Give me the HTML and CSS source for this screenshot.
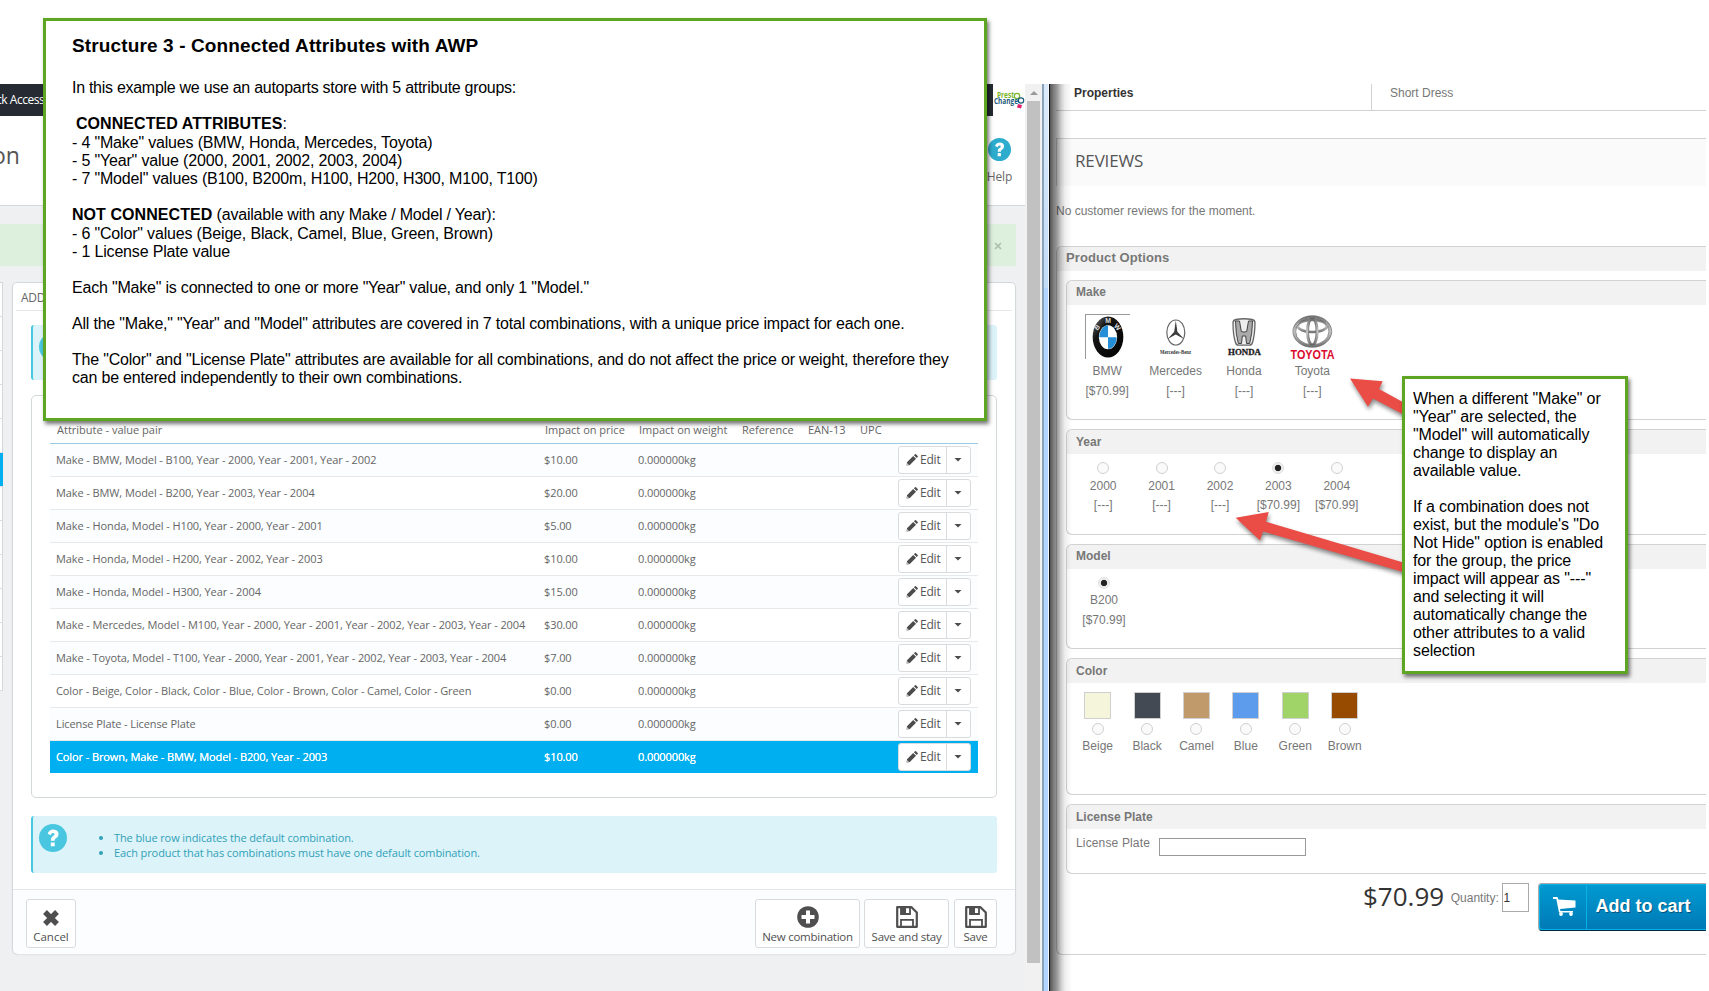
FILE: index.html
```html
<!DOCTYPE html>
<html lang="en">
<head>
<meta charset="utf-8">
<title>Connected Attributes with AWP</title>
<link rel="stylesheet" href="styles.css">
</head>
<body>
<svg class="sprite" aria-hidden="true">
  <symbol id="pencil" viewBox="0 0 12 12"><path d="M1 8.200 7.200 2l2.800 2.800L3.800 11 .6 11.600zM7.900 1.300 9 .3q.5-.4 1 0L11.700 2q.4.5 0 1l-1 1.100z"/><path d="M1.400 9.300l1.300 1.300-1 .3-.5-.5z" fill="#fff"/></symbol>
  <symbol id="question" viewBox="0 0 28 28"><circle cx="14" cy="14" r="14"/><path class="mark" d="M8.600 9.600Q10.500 5.600 14.300 5.600q5.200.3 5.300 4.700 0 2.600-3.300 4.500-.6.500-.6 1.900h-3.900q-.1-3 1.600-4.200 2.200-1.100 2.200-2.200-.1-1.300-1.600-1.300-1.300 0-2.600 2.300zM11.800 18.400h3.900v3.900h-3.900z"/></symbol>
  <symbol id="floppy" viewBox="0 0 22 22"><path d="M1.200 1.200h14.300l5.300 5.300v14.300H1.200z" fill="none" stroke="currentColor" stroke-width="2.200" stroke-linejoin="round"/><path d="M5 20v-6.200h12V20M5 2v6h9V2" fill="none" stroke="currentColor" stroke-width="1.800"/><path d="M5 2h5v6H5z"/></symbol>
</svg>
<main class="desktop">
  <section class="admin">
    <header class="topbar"><span class="quick">ck Access</span><span class="brand">
      <svg width="32" height="32" viewBox="0 0 32 32"><text x="4" y="13.500" class="lg1" textLength="17" lengthAdjust="spacingAndGlyphs">Prest</text><circle cx="24" cy="12" r="2.700" fill="none" stroke="#7ab629" stroke-width="1.200"/><text x="1" y="20" class="lg2" textLength="24" lengthAdjust="spacingAndGlyphs">Change</text><circle cx="28" cy="16.500" r="2.700" fill="none" stroke="#1c5b7c" stroke-width="1.200"/><path d="M25 20l4 1-1 3.500-4-1z" fill="#e0206c"/></svg></span></header>
    <div class="titlebar"><h2>on</h2><div class="help"><svg width="23" height="23" fill="#2eacce"><use href="#question"/></svg><span>Help</span></div></div>
    <div class="success"><svg width="8" height="8" viewBox="0 0 8 8"><path d="M1 1l6 6M7 1L1 7" stroke="#a9bfac" stroke-width="1.700"/></svg></div>
    <div class="workspace">
      <nav class="tabs"><i></i><i></i><i></i><i></i><i></i><i class="active"></i><i></i><i></i><i></i><i></i><i></i><i></i></nav>
      <div class="panel">
        <h3>ADD</h3>
        <div class="notice notice-top"><svg width="28" height="28" fill="#4ac7e0"><use href="#question"/></svg></div>
        <div class="combos">
          <div class="row head"><span>Attribute - value pair</span><span>Impact on price</span><span>Impact on weight</span><span>Reference</span><span>EAN-13</span><span>UPC</span></div>
          <div class="row"><span>Make - BMW, Model - B100, Year - 2000, Year - 2001, Year - 2002</span><span>$10.00</span><span>0.000000kg</span><div class="btn"><b><svg width="12" height="12"><use href="#pencil"/></svg>Edit</b><i></i></div></div>
          <div class="row"><span>Make - BMW, Model - B200, Year - 2003, Year - 2004</span><span>$20.00</span><span>0.000000kg</span><div class="btn"><b><svg width="12" height="12"><use href="#pencil"/></svg>Edit</b><i></i></div></div>
          <div class="row"><span>Make - Honda, Model - H100, Year - 2000, Year - 2001</span><span>$5.00</span><span>0.000000kg</span><div class="btn"><b><svg width="12" height="12"><use href="#pencil"/></svg>Edit</b><i></i></div></div>
          <div class="row"><span>Make - Honda, Model - H200, Year - 2002, Year - 2003</span><span>$10.00</span><span>0.000000kg</span><div class="btn"><b><svg width="12" height="12"><use href="#pencil"/></svg>Edit</b><i></i></div></div>
          <div class="row"><span>Make - Honda, Model - H300, Year - 2004</span><span>$15.00</span><span>0.000000kg</span><div class="btn"><b><svg width="12" height="12"><use href="#pencil"/></svg>Edit</b><i></i></div></div>
          <div class="row"><span>Make - Mercedes, Model - M100, Year - 2000, Year - 2001, Year - 2002, Year - 2003, Year - 2004</span><span>$30.00</span><span>0.000000kg</span><div class="btn"><b><svg width="12" height="12"><use href="#pencil"/></svg>Edit</b><i></i></div></div>
          <div class="row"><span>Make - Toyota, Model - T100, Year - 2000, Year - 2001, Year - 2002, Year - 2003, Year - 2004</span><span>$7.00</span><span>0.000000kg</span><div class="btn"><b><svg width="12" height="12"><use href="#pencil"/></svg>Edit</b><i></i></div></div>
          <div class="row"><span>Color - Beige, Color - Black, Color - Blue, Color - Brown, Color - Camel, Color - Green</span><span>$0.00</span><span>0.000000kg</span><div class="btn"><b><svg width="12" height="12"><use href="#pencil"/></svg>Edit</b><i></i></div></div>
          <div class="row"><span>License Plate - License Plate</span><span>$0.00</span><span>0.000000kg</span><div class="btn"><b><svg width="12" height="12"><use href="#pencil"/></svg>Edit</b><i></i></div></div>
          <div class="row default"><span>Color - Brown, Make - BMW, Model - B200, Year - 2003</span><span>$10.00</span><span>0.000000kg</span><div class="btn"><b><svg width="12" height="12"><use href="#pencil"/></svg>Edit</b><i></i></div></div>
        </div>
        <div class="notice notice-bottom"><svg width="28" height="28" fill="#4ac7e0"><use href="#question"/></svg><ul><li>The blue row indicates the default combination.</li><li>Each product that has combinations must have one default combination.</li></ul></div>
        <footer class="actions">
          <div class="act cancel"><svg width="18" height="18" viewBox="0 0 18 18"><path d="M3 3l12 12M15 3L3 15" stroke="currentColor" stroke-width="5.400"/></svg>Cancel</div>
          <div class="act new"><svg width="22" height="22" viewBox="0 0 22 22"><circle cx="11" cy="11" r="10.800"/><path d="M11 4.500v13M4.500 11h13" stroke="#fff" stroke-width="4"/></svg>New combination</div>
          <div class="act stay"><svg width="22" height="22"><use href="#floppy"/></svg>Save and stay</div>
          <div class="act save"><svg width="22" height="22"><use href="#floppy"/></svg>Save</div>
        </footer>
      </div>
    </div>
  </section>
  <div class="scrollbar"><i></i><b></b></div>
  <div class="frame"></div>
  <section class="shop">
    <div class="props"><b>Properties</b><span>Short Dress</span></div>
    <h2 class="reviews">REVIEWS</h2>
    <p class="none">No customer reviews for the moment.</p>
    <div class="options">
      <h3>Product Options</h3>
      <div class="groups">
        <div class="group make"><h4>Make</h4><div class="choices">
          <div class="opt"><svg class="chosen" width="45" height="45" viewBox="0 0 45 45"><defs><linearGradient id="g" x1="0" y1="0" x2="1" y2="1"><stop offset="0" stop-color="#777"/><stop offset=".3" stop-color="#151515"/><stop offset="1" stop-color="#000"/></linearGradient><linearGradient id="s" x1="0" y1="0" x2="0" y2="1"><stop offset="0" stop-color="#777"/><stop offset=".5" stop-color="#c5c5c5"/><stop offset="1" stop-color="#777"/></linearGradient></defs><ellipse cx="22.500" cy="22.500" rx="15.700" ry="21" fill="url(#g)"/><ellipse cx="22.500" cy="22.700" rx="9.300" ry="12.300" fill="#fff"/><path d="M22.500 10.800v11.900h-8.900a8.900 11.900 0 0 1 8.900-11.900zM22.500 34.600V22.700h8.900a8.900 11.900 0 0 1-8.900 11.900z" fill="#248fd6"/><g class="bmw"><text transform="translate(11.500 16) rotate(-48)">B</text><text x="19.700" y="8.400">M</text><text transform="translate(28 11.500) rotate(48)">W</text></g></svg><span>BMW</span><span>[$70.99]</span></div>
          <div class="opt"><svg width="45" height="45" viewBox="0 0 45 45"><ellipse cx="22.800" cy="18.500" rx="9" ry="12.500" fill="none" stroke="#666" stroke-width="1.200"/><path d="M22.800 6.500l1.600 11.200 6.500 7.300-8.100-4.400-8.100 4.400 6.500-7.300z" fill="#3d3d3d"/><text class="mb" x="7" y="40" textLength="31" lengthAdjust="spacingAndGlyphs">Mercedes-Benz</text></svg><span>Mercedes</span><span>[---]</span></div>
          <div class="opt"><svg width="45" height="45" viewBox="0 0 45 45"><path d="M15 5.500Q23 4 31 5.500q3 .5 3 3.500-.2 12-2.500 19.500-.5 2.500-3 2.700h-11q-2.500-.2-3-2.700Q12 21 12 9q0-3 3-3.500z" fill="#eee" stroke="#666" stroke-width="1.300"/><path d="M14.500 7h4l1.800 10.500q2.700 1.200 5.400 0L27.500 7h4q-.2 13-2.800 22.500h-3.200l-.8-7.500h-3.400l-.8 7.500h-3.200Q14.700 20 14.500 7z" fill="#aaa" stroke="#444" stroke-width="1"/><text class="ho" x="7" y="40.500" textLength="33" lengthAdjust="spacingAndGlyphs">HONDA</text></svg><span>Honda</span><span>[---]</span></div>
          <div class="opt"><svg width="45" height="45" viewBox="0 0 45 45" fill="none" stroke="url(#s)" stroke-width="2.600"><ellipse cx="22.300" cy="17.500" rx="18" ry="14.500"/><ellipse cx="22.300" cy="12" rx="14.500" ry="6"/><ellipse cx="22.300" cy="17.500" rx="5" ry="13.500"/><g stroke="#555" stroke-width=".6"><ellipse cx="22.300" cy="17.500" rx="19.400" ry="15.800"/><ellipse cx="22.300" cy="17.500" rx="16.600" ry="13.200"/><ellipse cx="22.300" cy="17.500" rx="3.700" ry="12.200"/></g><text class="to" x="0.500" y="45" textLength="44" lengthAdjust="spacingAndGlyphs">TOYOTA</text></svg><span>Toyota</span><span>[---]</span></div>
        </div></div>
        <div class="group year"><h4>Year</h4><div class="choices">
          <div class="opt"><i></i><span>2000</span><span>[---]</span></div><div class="opt"><i></i><span>2001</span><span>[---]</span></div><div class="opt"><i></i><span>2002</span><span>[---]</span></div><div class="opt"><i class="on"></i><span>2003</span><span>[$70.99]</span></div><div class="opt"><i></i><span>2004</span><span>[$70.99]</span></div>
        </div></div>
        <div class="group model"><h4>Model</h4><div class="choices"><div class="opt"><i class="on"></i><span>B200</span><span>[$70.99]</span></div></div></div>
        <div class="group color"><h4>Color</h4><div class="choices">
          <div class="opt"><b class="beige"></b><i></i><span>Beige</span></div><div class="opt"><b class="black"></b><i></i><span>Black</span></div><div class="opt"><b class="camel"></b><i></i><span>Camel</span></div><div class="opt"><b class="blue"></b><i></i><span>Blue</span></div><div class="opt"><b class="green"></b><i></i><span>Green</span></div><div class="opt"><b class="brown"></b><i></i><span>Brown</span></div>
        </div></div>
        <div class="group plate"><h4>License Plate</h4><label>License Plate <input type="text"></label></div>
      </div>
      <div class="buy"><strong>$70.99</strong><span>Quantity:</span><em>1</em>
        <div class="cart"><div><svg width="23" height="20" viewBox="0 0 23 20"><path d="M0 0h4.500l.8 2.500L22.500 3.500v7L7 12l.5 2H20v1.500H6L3.300 2H0z" fill="#fff"/><circle cx="8" cy="17" r="1.900" fill="#fff"/><circle cx="18" cy="17" r="1.900" fill="#fff"/></svg></div><b>Add to cart</b></div>
      </div>
    </div>
    <div class="shade"></div>
  </section>
</main>
<svg class="arrows" width="180" height="200" viewBox="1230 375 180 200"><g fill="#ea4c46"><path d="M1350 378.500L1382.700 381.300 1379 389 1410 406V418L1373 398.500 1368 406.700z"/><path d="M1235.700 517.700L1268.700 512 1266 521.700 1410 564.500V574L1263 531.500 1260 540.500z"/></g></svg>
<aside class="note intro">
  <h1>Structure 3 - Connected Attributes with AWP</h1>
  <p class="opening">In this example we use an autoparts store with 5 attribute groups:</p>
  <p class="lead con"><b>CONNECTED ATTRIBUTES</b>:</p>
  <p class="list">- 4 "Make" values (BMW, Honda, Mercedes, Toyota)<br>- 5 "Year" value (2000, 2001, 2002, 2003, 2004)<br>- 7 "Model" values (B100, B200m, H100, H200, H300, M100, T100)</p>
  <p class="lead"><b>NOT CONNECTED</b> (available with any Make / Model / Year):</p>
  <p class="list">- 6 "Color" values (Beige, Black, Camel, Blue, Green, Brown)<br>- 1 License Plate value</p>
  <p>Each "Make" is connected to one or more "Year" value, and only 1 "Model."</p>
  <p>All the "Make," "Year" and "Model" attributes are covered in 7 total combinations, with a unique price impact for each one.</p>
  <p>The "Color" and "License Plate" attributes are available for all combinations, and do not affect the price or weight, therefore they<br>can be entered independently to their own combinations.</p>
</aside>
<aside class="note tip">
  <p>When a different "Make" or<br>"Year" are selected, the<br>"Model" will automatically<br>change to display an<br>available value.</p>
  <p>If a combination does not<br>exist, but the module's "Do<br>Not Hide" option is enabled<br>for the group, the price<br>impact will appear as "---"<br>and selecting it will<br>automatically change the<br>other attributes to a valid<br>selection</p>
</aside>
</body>
</html>
```
FILE: styles.css
```css
* { box-sizing: border-box; }
body, h1, h2, h3, h4, p, ul { margin: 0; padding: 0; }
body { position: relative; width: 1709px; height: 991px; overflow: hidden; background: #fff; font-family: "Liberation Sans", Arial, sans-serif; }
i, em { font-style: normal; }
svg { display: block; flex: none; }
.sprite { position: absolute; width: 0; height: 0; }
.desktop { display: flex; width: 1706px; padding-top: 84px; height: 991px; }

/* Back-office window */
.admin { width: 1025px; background: #eff0f2; font-family: "Open Sans", sans-serif; font-size: 11px; letter-spacing: -.1px; color: #666; overflow: hidden; }
.topbar { display: flex; justify-content: space-between; height: 32px; background: #262b33; color: #fff; }
.quick { line-height: 32px; margin-left: -4px; font-size: 12px; letter-spacing: -.45px; white-space: nowrap; }
.brand { width: 32px; background: #fff; }
.lg1, .lg2 { font: bold 8px "Open Sans", sans-serif; fill: #7ab629; letter-spacing: 0; }
.lg2 { fill: #1c5b7c; }
.titlebar { display: flex; justify-content: space-between; height: 90px; background: #fff; border-bottom: 1px solid #d5d8da; }
.titlebar h2 { margin: 22px 0 0 -8px; font-weight: 400; font-size: 23px; line-height: 34px; color: #555; }
.help { width: 51px; display: flex; flex-direction: column; align-items: center; padding-top: 22px; }
.help span { font-size: 12px; line-height: 16px; margin-top: 8px; }
.mark { fill: #fff; }
.notice .mark { fill: #dbf3f7; }
.success { display: flex; justify-content: flex-end; align-items: center; width: 1016px; height: 42px; margin-top: 18px; padding: 2px 14px 0 0; background: #ddf0de; }
.workspace { display: flex; gap: 9px; margin-top: 16px; }
.tabs { width: 3px; height: 409px; background: #fff; border-right: 1px solid #d5d8da; border-top: 1px solid #d5d8da; }
.tabs i { display: block; height: 34px; border-bottom: 1px solid #dcdfe1; }
.tabs .active { width: 3px; background: #00aff0; }
.panel { width: 1004px; height: 672px; background: #fff; border: 1px solid #d3d8db; border-radius: 5px; box-shadow: 0 1px 2px #0001; }
.panel h3 { margin: 0 3px; height: 28px; padding-left: 5px; border-bottom: 1px solid #e8e8e8; font-weight: 400; font-size: 12px; line-height: 30px; letter-spacing: -.3px; }
.notice { display: flex; margin: 14px 18px 0 18px; background: #dcf4f9; border-left: 2px solid #4ac7e0; border-radius: 3px; color: #31a0b8; padding: 8px 6px; }
.notice-top { height: 55px; }
.combos { height: 403px; margin: 15px 18px 0 18px; border: 1px solid #d3d8db; border-radius: 5px; padding: 19px 18px 0 18px; }
.row { display: grid; grid-template-columns: 488px 94px 260px 73px; align-items: center; height: 33px; padding: 0 0 1px 6px; border-bottom: 1px solid #e6eaec; white-space: nowrap; font-size: 11px; }
.row:nth-child(even) { background: #fbfdff; }
.head { height: 29px; grid-template-columns: 488px 94px 103px 66px 52px 60px; border-color: #99cbe6; padding: 0 0 0 7px; letter-spacing: 0; }
.row.default { background: #00aff0; color: #fff; border-color: #00aff0; height: 32px; padding-bottom: 0; text-shadow: 0 0 .5px #fff; }
.btn { display: flex; width: 73px; height: 28px; background: #fff; border: 1px solid #d8dcde; border-radius: 3px; color: #555; font-size: 12px; letter-spacing: -.2px; text-shadow: none; }
.btn b { width: 48px; display: flex; align-items: center; gap: 2px; padding-left: 7px; font-weight: 400; border-right: 1px solid #d8dcde; }
.btn svg { fill: #4c4c4c; }
.btn i { margin: 11px 0 0 7px; width: 8px; height: 4px; background: #4c4c4c; clip-path: polygon(0 0, 100% 0, 50% 100%); }
.notice-bottom { height: 57px; margin-top: 18px; }
.notice ul { margin: 6px 0 0 47px; font-size: 11px; line-height: 15px; }
.actions { display: flex; height: 65px; margin-top: 16px; padding: 9px 18px 0 13px; border-top: 1px solid #e3e7e9; background: #fcfdfe; border-radius: 0 0 5px 5px; color: #555; }
.act { display: flex; flex-direction: column; align-items: center; justify-content: flex-end; gap: 1px; height: 49px; padding-bottom: 2px; border: 1px solid #d8dcde; border-radius: 3px; background: #fff; font-size: 11.500px; letter-spacing: -.25px; line-height: 16px; white-space: nowrap; fill: #4f4f4f; color: #4f4f4f; }
.cancel { width: 50px; margin-right: auto; gap: 2px; letter-spacing: 0; }
.new { width: 105px; margin-right: 4px; }
.stay { width: 85px; margin-right: 5px; }
.save { width: 43px; }

/* Window chrome */
.scrollbar { width: 17px; background: #f1f1f1; padding-left: 2px; }
.scrollbar i { display: block; width: 8px; height: 4px; margin: 7px 0 6px 3px; background: #999; clip-path: polygon(50% 0, 100% 100%, 0 100%); }
.scrollbar b { display: block; width: 13px; height: 862px; background: #c1c1c1; }
.frame { width: 8px; background: linear-gradient(#dcebfb 0, #c2dcf8 204px, #b1d5ff 204px); border-left: 2px solid #8aa3bb; border-right: 1px solid #111; box-shadow: inset -1px 0 #eef6ff; }

/* Storefront window */
.shop { position: relative; width: 656px; padding-left: 6px; color: #777; font-size: 12px; }
.shade { position: absolute; left: 0; top: 0; bottom: 0; width: 22px; background: linear-gradient(90deg, #000a 0, #0008 3px, #0006 7px, #0003 11px, #0001 15px, #0000); }
.props { display: flex; height: 27px; border-bottom: 1px solid #d2d2d2; line-height: 19px; }
.props b { width: 316px; padding-left: 18px; border-right: 1px solid #d2d2d2; color: #333; }
.props span { padding-left: 18px; }
.reviews { height: 48px; margin-top: 27px; padding-left: 18px; border: 1px solid #d2d2d2; border-width: 1px 0 0 1px; background: #fafafa; color: #555; font: 17px/43px "Open Sans", sans-serif; letter-spacing: -.15px; }
.none { margin-top: 17px; line-height: 16px; }
.options { height: 709px; margin-top: 27px; border: 1px solid #d2d2d2; border-right: 0; border-radius: 6px 0 0 6px; }
.options h3 { height: 24px; padding-left: 9px; border-radius: 6px 0 0 0; background: #f2f2f2; font-size: 13px; line-height: 22px; letter-spacing: .1px; }
.groups { display: flex; flex-direction: column; gap: 9px; padding: 9px 0 0 9px; }
.group { border: 1px solid #d2d2d2; border-right: 0; border-radius: 6px 0 0 6px; }
.group h4 { height: 24px; padding-left: 9px; border-radius: 6px 0 0 0; background: #f2f2f2; font-size: 12px; line-height: 24px; }
.make h4, .model h4 { line-height: 22px; }
.make { height: 140px; } .year { height: 106px; } .model { height: 105px; } .color { height: 137px; } .plate { height: 70px; }
.choices { display: flex; padding: 9px 0 0 6px; }
.year .choices, .model .choices { padding: 8px 0 0 7px; }
.opt { display: flex; flex-direction: column; align-items: center; width: 68.400px; line-height: 20px; }
.make .opt > svg { margin-bottom: 2px; overflow: visible; }
.chosen { border: 1px solid #999; border-width: 1px 0 0 1px; }
.year .opt { width: 58.400px; } .model .opt { width: 60px; } .color .opt { width: 49.400px; }
.opt i { width: 12px; height: 12px; border: 1px solid #d0d0d0; border-radius: 50%; background: #fafafa; }
.opt i.on { background: radial-gradient(circle, #222 0 2.800px, #eee 3.600px); border-color: #e0e0e0; }
.year .opt i { margin-bottom: 3px; } .year .opt span { line-height: 19px; }
.model .opt i { margin-bottom: 1px; }
.color .opt b { width: 27px; height: 27px; border: 1px solid #d0d0d0; margin-bottom: 4px; }
.color .opt i { margin-bottom: 1px; }
.beige { background: #f5f5dc; } .black { background: #434a54; } .camel { background: #c19a6b; } .blue { background: #5d9cec; } .green { background: #a0d468; } .brown { background: #964b00; }
.bmw { font: bold 7px "Liberation Sans", sans-serif; fill: #ddd; }
.mb { font: bold 6.500px "Liberation Serif", serif; fill: #333; }
.ho { font: bold 8px "Liberation Serif", serif; fill: #222; stroke: #222; stroke-width: .3px; }
.to { font: bold 12.500px "Liberation Sans", sans-serif; fill: #dc0a2d; stroke: none; }
.plate label { display: flex; padding: 6px 0 0 9px; line-height: 16px; gap: 9px; letter-spacing: .15px; }
.plate input { width: 147px; height: 18px; margin-top: 3px; padding: 0; border: 1px solid #999; }
.buy { display: flex; height: 48px; margin: 9px 0 0 306px; }
.buy strong { width: 88px; font: 26px/27px "Open Sans", sans-serif; color: #333; }
.buy span { width: 51px; line-height: 30px; font-size: 12px; }
.buy em { width: 27px; height: 29px; padding-left: 1px; border: 1px solid #aaa; line-height: 28px; color: #333; }
.cart { display: flex; width: 169px; margin-left: 9px; height: 48px; border: 1px solid #aaa; border-right: 0; background: #06b2e6; padding: 1px 0 1px 1px; border-bottom-color: #012740; border-radius: 4px 0 0 4px; }
.cart > div { width: 46px; padding: 12px 0 0 13px; margin-right: 1px; background: linear-gradient(#009ad0, #007ab7); border-radius: 3px 0 0 3px; }
.cart b { flex: 1; padding-left: 9px; background: linear-gradient(#009ad0, #007ab7); color: #fff; font-size: 18px; line-height: 43px; text-shadow: 1px 1px #0006; white-space: nowrap; }

/* Annotations */
.arrows { position: absolute; left: 1230px; top: 375px; filter: drop-shadow(1px 3px 2px #0007); }
.note { position: absolute; background: #fff; border: 3px solid #5fa524; box-shadow: 2px 3px 4px #0008; color: #000; font-size: 16px; line-height: 18px; letter-spacing: -.2px; white-space: nowrap; }
.intro { left: 43px; top: 18px; width: 944px; height: 403px; padding: 15px 26px 0; }
.intro h1 { font-size: 19px; line-height: 19px; margin-bottom: 24px; letter-spacing: .13px; }
.intro b { letter-spacing: .06px; }
.intro p + p { margin-top: 18px; }
.intro .opening { letter-spacing: -.28px; }
.intro .lead { line-height: 19px; margin-top: 17px; }
.intro .con { padding-left: 4px; }
.intro .lead + .list { margin-top: 1px; letter-spacing: -.17px; }
.tip { left: 1402px; top: 376px; width: 226px; height: 298px; padding: 11px 8px 0; letter-spacing: -.12px; }
.tip p + p { margin-top: 18px; }
```
